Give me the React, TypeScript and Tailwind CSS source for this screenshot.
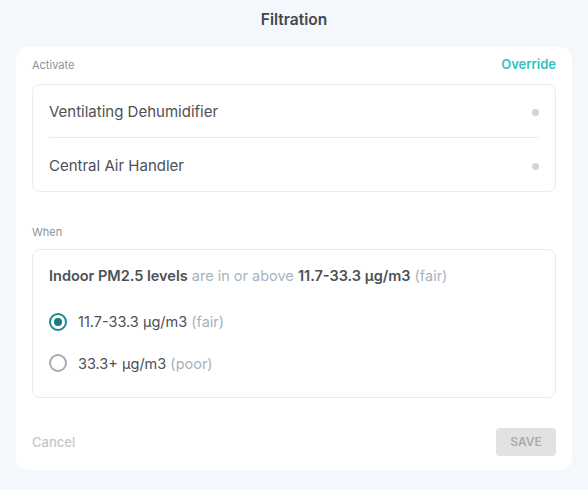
const font = { fontFamily: 'Inter, "Noto Sans", sans-serif' };

function Dot() {
  return <span className="h-[7px] w-[7px] rounded-full bg-[#cdd5de]" />;
}

function Radio({ checked }: { checked: boolean }) {
  if (checked) {
    return (
      <span className="flex h-[18px] w-[18px] items-center justify-center rounded-full border-2 border-[#1a8a8c]">
        <span className="h-[8px] w-[8px] rounded-full bg-[#137d80]" />
      </span>
    );
  }
  return <span className="h-[18px] w-[18px] rounded-full border-2 border-[#a3adb5]" />;
}

export default function App() {
  return (
    <div className="min-h-[490px] bg-[#f4f7fb] px-4 pb-5" style={font}>
      <h1 className="flex h-[47px] items-center justify-center pb-2 text-[15.5px] font-semibold text-[#41474d]">
        Filtration
      </h1>

      <div className="rounded-xl bg-white px-4 pb-[14px] pt-[8px]">
        {/* Activate */}
        <div className="flex items-center justify-between">
          <span className="text-[11px] text-[#8b9399]">Activate</span>
          <button className="text-[13px] font-semibold text-[#2ec2c4]">Override</button>
        </div>
        <div className="mt-[9px] rounded-lg border border-[#e8ecf0] px-4">
          <div className="flex h-[53px] items-center justify-between border-b border-[#e6ecf2] pt-[4px]">
            <span className="text-[15px] text-[#4b5157]">Ventilating Dehumidifier</span>
            <Dot />
          </div>
          <div className="flex h-[53px] items-center justify-between pt-[5px]">
            <span className="text-[15px] text-[#4b5157]">Central Air Handler</span>
            <Dot />
          </div>
        </div>

        {/* When */}
        <div className="mt-[32px] text-[11px] text-[#8b9399]">When</div>
        <div className="mt-[9px] rounded-lg border border-[#e8ecf0] px-4 pb-[23px] pt-[15px]">
          <p className="text-[14.5px] text-[#a6b3c0]">
            <span className="font-semibold text-[#4b5157]">Indoor PM2.5 levels</span> are in or above{' '}
            <span className="font-semibold text-[#4b5157]">11.7-33.3 µg/m3</span> (fair)
          </p>
          <div className="mt-[24px] flex flex-col gap-[20px]">
            <label className="flex items-center gap-[11px]">
              <Radio checked />
              <span className="text-[14.5px] text-[#4b5157]">
                11.7-33.3 µg/m3 <span className="text-[#a6b3c0]">(fair)</span>
              </span>
            </label>
            <label className="flex items-center gap-[11px]">
              <Radio checked={false} />
              <span className="text-[14.5px] text-[#4b5157]">
                33.3+ µg/m3 <span className="text-[#a6b3c0]">(poor)</span>
              </span>
            </label>
          </div>
        </div>

        {/* Footer */}
        <div className="mt-[30px] flex items-center justify-between">
          <button className="text-[13px] font-medium text-[#c4c7cb]">Cancel</button>
          <button className="h-[28px] w-[60px] rounded bg-[#e2e2e2] text-[12px] font-semibold text-[#a9acaf]">
            SAVE
          </button>
        </div>
      </div>
    </div>
  );
}
